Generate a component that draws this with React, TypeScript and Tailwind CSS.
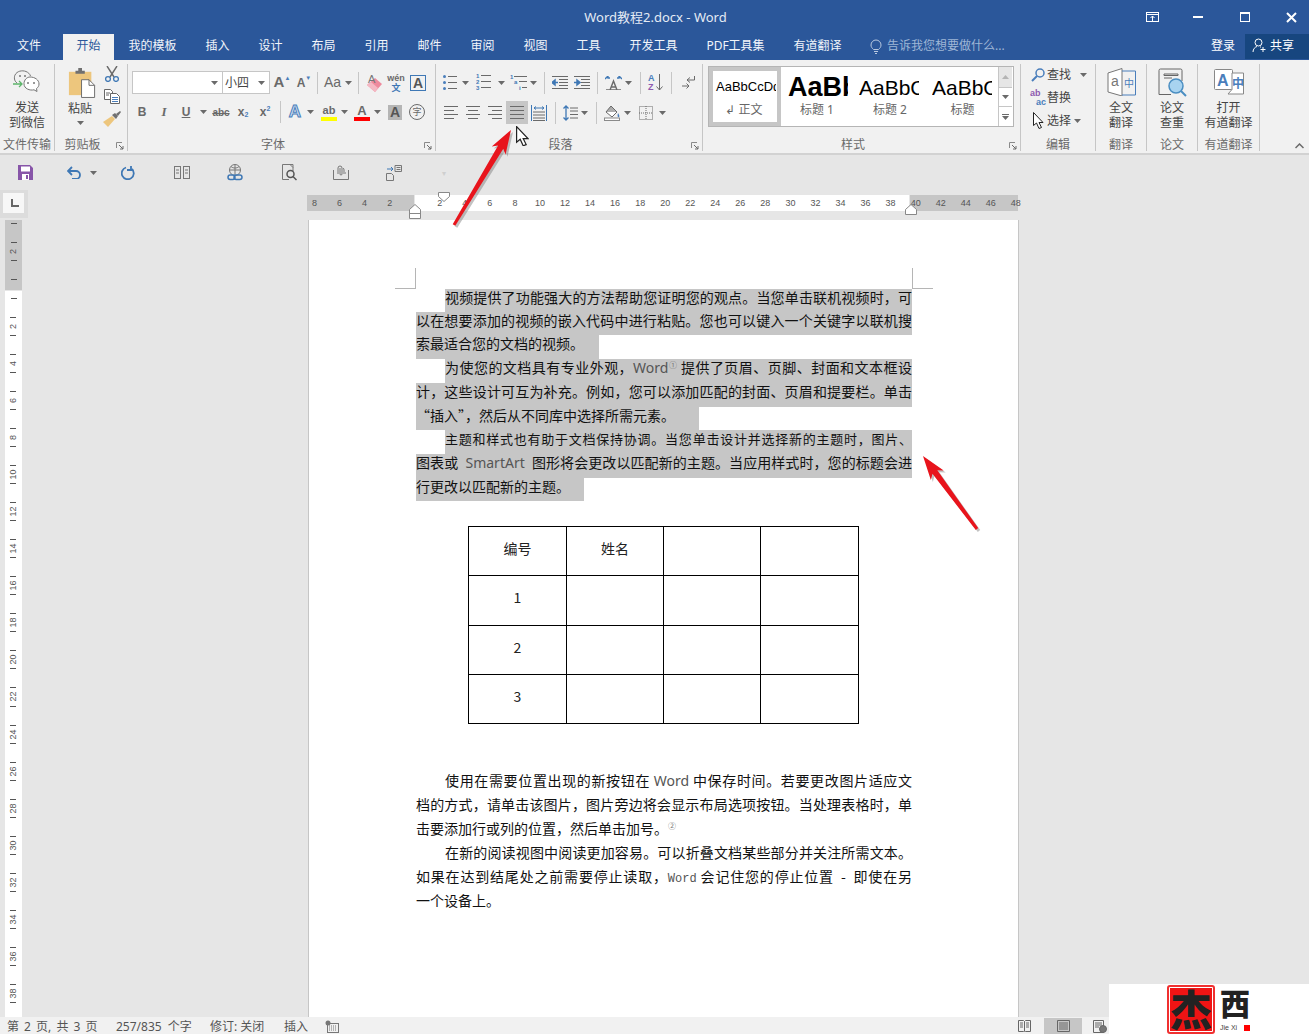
import type { ReactNode } from "react";

const ui = "font-['Noto_Sans','Noto_Sans_CJK_SC',sans-serif]";
const latin = "font-['Liberation_Sans',sans-serif]";

const Caret = ({ className = "" }: { className?: string }) => (
  <svg width="7" height="4" viewBox="0 0 7 4" className={className}>
    <path d="M0 0h7L3.5 4z" fill="#6a6a6a" />
  </svg>
);

const Slot = ({ className, children }: { className: string; children?: ReactNode }) => (
  <div className={`flex h-full shrink-0 items-center justify-center ${className}`}>{children}</div>
);

const Sep = ({ className = "" }: { className?: string }) => (
  <div className={`h-[22px] w-px shrink-0 bg-[#c6c6c6] ${className}`} />
);

const Launcher = () => (
  <svg width="8" height="8" viewBox="0 0 8 8" className="absolute right-[3px] bottom-[1px]">
    <path d="M.5 6V.5H6" fill="none" stroke="#8a8a8a" />
    <path d="M3 3l4 4M7 4v3H4" fill="none" stroke="#6a6a6a" />
  </svg>
);

// ---- ribbon icons ----
const WechatIcon = () => (
  <svg width="28" height="25" viewBox="0 0 28 25" fill="none">
    <path d="M4 14C1 12 1 8 2 6c2-4 7-5 11-3.500 2 .8 4 2.500 4.500 4.500" stroke="#777" />
    <path d="M17 8c5 0 9 3 9 7 0 2-1 3.500-2.500 4.500l.5 3-3-1.700c-4 1-10-1-10-6 0-4 3-6.800 6-6.800z" fill="#fff" stroke="#777" />
    <circle cx="7" cy="7" r="1" fill="#777" /><circle cx="12" cy="7" r="1" fill="#777" />
    <circle cx="15" cy="14" r="1" fill="#777" /><circle cx="21" cy="14" r="1" fill="#777" />
    <path d="M0 15h9M6 12l3 3-3 3" stroke="#5db56b" strokeWidth="1.300" />
  </svg>
);
const PasteIcon = () => (
  <svg width="28" height="30" viewBox="0 0 30 32">
    <rect x="1" y="4" width="24" height="25" fill="#edc67d" />
    <path d="M8 6V3h3V0h4v3h3v3z" fill="#707070" />
    <path d="M14.500 12.500h8l6 6v13h-14z" fill="#fff" stroke="#666" />
    <path d="M22.500 12.500v6h6" fill="none" stroke="#666" />
  </svg>
);
const ScissorsIcon = () => (
  <svg width="16" height="16" viewBox="0 0 16 16" fill="none">
    <path d="M3 0l7 11M13 0L6 11" stroke="#6a6a6a" strokeWidth="1.400" />
    <circle cx="4" cy="13" r="2.400" stroke="#3f78b5" strokeWidth="1.300" />
    <circle cx="12" cy="13" r="2.400" stroke="#3f78b5" strokeWidth="1.300" />
  </svg>
);
const CopyIcon = () => (
  <svg width="16" height="15" viewBox="0 0 16 15" fill="#fff" stroke="#666">
    <path d="M.5.500h6l2 2v8h-8z" />
    <path d="M6.500 4.500h6l3 3v7h-9z" />
    <path d="M8 8.500h6M8 10.500h6M8 12.500h6" stroke="#4a7ebb" />
    <path d="M2 4h4M2 6h3" />
  </svg>
);
const PainterIcon = () => (
  <svg width="18" height="16" viewBox="0 0 18 16">
    <path d="M9 5l-9 6 5 5 7-8z" fill="#edc67d" />
    <path d="M9 4l3-2 3 3-2 3z" fill="#707070" />
    <path d="M13 3l4-3 1 1-3 4z" fill="#707070" />
  </svg>
);
const EraserIcon = () => (
  <svg width="17" height="20" viewBox="0 0 17 20">
    <path d="M1 12L9 5l7 6-7 8z" fill="#ee8a9d" />
    <path d="M1 12l4-3 7 6-3 4z" fill="#f5b8c3" />
    <text x="2" y="10" fontSize="11" fill="#777" fontFamily="Liberation Sans">A</text>
  </svg>
);
const Lines = ({ rows, w = 14 }: { rows: [number, number][]; w?: number }) => (
  <svg width={w} height="15" viewBox={`0 0 ${w} 15`}>
    {rows.map(([x, l], i) => (
      <rect key={i} x={x} y={1 + i * 4} width={l} height="1" fill="#6a6a6a" />
    ))}
  </svg>
);
const BulletIcon = () => (
  <svg width="14" height="16" viewBox="0 0 14 16">
    {[1, 7, 13].map((y) => (
      <g key={y}>
        <circle cx="1.500" cy={y + 0.5} r="1.500" fill="#4a7ebb" />
        <rect x="5" y={y} width="9" height="1" fill="#6a6a6a" />
      </g>
    ))}
  </svg>
);
const NumberIcon = () => (
  <svg width="16" height="17" viewBox="0 0 16 17">
    {[4, 10, 16].map((y, i) => (
      <g key={y}>
        <text x="0" y={y} fontSize="6" fill="#3f78b5" fontFamily="Liberation Sans" fontWeight="700">{i + 1}</text>
        <rect x="5" y={y - 3} width="10" height="1" fill="#6a6a6a" />
      </g>
    ))}
  </svg>
);
const MultiIcon = () => (
  <svg width="18" height="17" viewBox="0 0 18 17">
    <text x="0" y="5" fontSize="6" fill="#3f78b5" fontWeight="700" fontFamily="Liberation Sans">1</text>
    <rect x="4" y="2" width="13" height="1" fill="#6a6a6a" />
    <text x="4" y="10" fontSize="6" fill="#3f78b5" fontWeight="700" fontFamily="Liberation Sans">a</text>
    <rect x="9" y="7" width="8" height="1" fill="#6a6a6a" />
    <text x="9" y="16" fontSize="6" fill="#3f78b5" fontWeight="700" fontFamily="Liberation Sans">i</text>
    <rect x="12" y="13" width="5" height="1" fill="#6a6a6a" />
  </svg>
);
const IndentIcon = ({ flip = false }: { flip?: boolean }) => (
  <svg width="16" height="13" viewBox="0 0 16 13">
    <path d="M0 .5h16M7 3.500h9M7 6.500h9M7 9.500h9M0 12.500h16" stroke="#6a6a6a" />
    <path d={flip ? "M0 6.500h3V4l3 2.500L3 9V6.500" : "M6 6.500H3V4L0 6.500 3 9V6.500"} stroke="#3f78b5" strokeWidth="1.500" fill="#3f78b5" />
  </svg>
);
const DirectionIcon = () => (
  <svg width="17" height="14" viewBox="0 0 17 14" fill="none">
    <path d="M5 14L8.500 5 12 14M6 11h5M1 14h15" stroke="#6a6a6a" strokeWidth="1.400" />
    <path d="M0 3l3-3v2h2M17 3l-3-3v2h-2" stroke="#3f78b5" strokeWidth="1.400" />
  </svg>
);
const SortIcon = () => (
  <div className={`relative flex h-[18px] w-[16px] ${latin}`}>
    <div className="flex flex-col text-[9px] leading-[9px] font-bold">
      <span className="text-[#4a7ebb]">A</span>
      <span className="text-[#8e5aaf]">Z</span>
    </div>
    <svg width="7" height="17" viewBox="0 0 7 17" className="ml-[1px]" fill="none">
      <path d="M3.500 0v16M.5 12.500l3 3.500 3-3.500" stroke="#6a6a6a" />
    </svg>
  </div>
);
const RtlIcon = () => (
  <svg width="13" height="14" viewBox="0 0 13 14" fill="none">
    <path d="M12.500 0v4H5M8 1.500L5 4l3 2.500" stroke="#6a6a6a" />
    <path d="M0 10h7M4.500 7.500L7 10l-2.500 2.500" stroke="#6a6a6a" />
  </svg>
);
const DistIcon = () => (
  <svg width="16" height="16" viewBox="0 0 16 16" fill="none">
    <path d="M.5 0v16" stroke="#3f78b5" /><path d="M15.500 0v16" stroke="#3f78b5" />
    <path d="M3 3h10M5 1.500L3 3l2 1.500M11 1.500L13 3l-2 1.500" stroke="#3f78b5" />
    <path d="M2 7h12M2 10h12M2 13h12M2 15.500h12" stroke="#6a6a6a" />
  </svg>
);
const SpacingIcon = () => (
  <svg width="15" height="16" viewBox="0 0 15 16" fill="none">
    <path d="M3 1v14M.5 3.500L3 1l2.500 2.500M.5 12.500L3 15l2.500-2.500" stroke="#3f78b5" strokeWidth="1.300" />
    <path d="M7 3h8M7 6h8M7 9.500h8M7 13h8" stroke="#6a6a6a" />
  </svg>
);
const ShadeIcon = () => (
  <svg width="17" height="17" viewBox="0 0 17 17" fill="none">
    <path d="M2 8l5-6 6 6-5 5z" fill="#fff" stroke="#6a6a6a" />
    <path d="M7 2l6 6H2z" fill="#6a6a6a" opacity=".55" />
    <path d="M14 9c1 2 2 3 1 4s-2-1-1-4z" fill="#4a7ebb" />
    <rect x=".5" y="14" width="15" height="2.500" fill="#fff" stroke="#8a8a8a" />
  </svg>
);
const BorderIcon = () => (
  <svg width="14" height="14" viewBox="0 0 14 14" fill="none" stroke="#6a6a6a" strokeDasharray="1 1">
    <rect x=".5" y=".5" width="13" height="13" />
    <path d="M7 0v14M0 7h14" />
  </svg>
);
const FindIcon = () => (
  <svg width="14" height="14" viewBox="0 0 14 14" fill="none">
    <circle cx="9" cy="5" r="4" stroke="#4a7ebb" strokeWidth="1.500" />
    <path d="M6 8l-5 5" stroke="#4a7ebb" strokeWidth="2" />
  </svg>
);
const ReplaceIcon = () => (
  <div className={`flex h-[18px] w-[16px] flex-col text-[9px] leading-[9px] font-bold ${latin}`}>
    <span className="text-[#8e5aaf]">ab</span>
    <span className="self-end text-[#4a7ebb]">ac</span>
  </div>
);
const PointerIcon = ({ s = 1 }: { s?: number }) => (
  <svg width={11 * s} height={17 * s} viewBox="0 0 11 17">
    <path d="M.5.500v13l3-2.500 2.500 5.500 2.500-1L6 10.500h4z" fill="#fff" stroke="#222" />
  </svg>
);
const TranslateIcon = () => (
  <svg width="29" height="28" viewBox="0 0 29 28" fill="none">
    <path d="M1 5l14-4.500V28L1 24z" fill="#fff" stroke="#777" />
    <text x="4" y="18" fontSize="14" fill="#777" fontFamily="Liberation Sans">a</text>
    <path d="M15 3h13.500v24H15" stroke="#4a7ebb" />
    <text x="17" y="19" fontSize="10" fill="#4a7ebb" fontFamily="Noto Sans CJK SC">中</text>
  </svg>
);
const CheckIcon = () => (
  <svg width="29" height="29" viewBox="0 0 29 29" fill="none">
    <path d="M24 13V2.500a1.500 1.500 0 0 0-1.500-1.500h-20A1.500 1.500 0 0 0 1 2.500v24H13" stroke="#666" />
    <path d="M6 6h14v1.500H6zM6 10h8" stroke="#666" />
    <circle cx="18" cy="18" r="7" fill="#a8d3f0" stroke="#4a8ec2" strokeWidth="1.500" />
    <path d="M23 23l5 5" stroke="#4a8ec2" strokeWidth="2" />
  </svg>
);
const OpenIcon = () => (
  <svg width="30" height="26" viewBox="0 0 30 26" fill="none">
    <rect x=".5" y=".5" width="18" height="20" rx="1" fill="#fff" stroke="#888" />
    <text x="3" y="17" fontSize="16" fontWeight="700" fill="#4a7ebb" fontFamily="Liberation Sans">A</text>
    <path d="M18 4h11.500v21H14l4-4.500z" fill="#fff" stroke="#888" />
    <text x="18" y="19" fontSize="12" fontWeight="700" fill="#4a7ebb" fontFamily="Noto Sans CJK SC">中</text>
  </svg>
);

// ---- ribbon groups ----
const Group = ({ className, label, launcher, children }: { className: string; label: string; launcher?: boolean; children: ReactNode }) => (
  <div className={`relative flex h-[87px] shrink-0 flex-col border-r border-[#c6c6c6] ${className}`}>
    <div className="min-h-0 flex-1">{children}</div>
    <div className={`h-[14px] text-center text-[12px] leading-[15px] text-[#6a6a6a] ${launcher ? "pr-[17px]" : ""}`}>{label}</div>
    {launcher && <Launcher />}
  </div>
);

const BigButton = ({ icon, lines, iconClass }: { icon: ReactNode; lines: string[]; iconClass: string }) => (
  <div className="flex flex-col items-center text-[12px] leading-[14.5px] text-[#444]">
    <div className={`mb-[4px] flex items-center justify-center ${iconClass}`}>{icon}</div>
    {lines.map((l) => (
      <div key={l} className="whitespace-nowrap">{l}</div>
    ))}
  </div>
);

const FontGroup = () => (
  <div className={`flex h-full flex-col ${latin}`}>
    <div className="mt-[7px] flex h-[23px] items-center pl-[4px] text-[#6a6a6a]">
      <div className="flex h-[23px] w-[91px] items-center justify-end border border-[#c6c6c6] bg-white pr-[4px]"><Caret /></div>
      <div className={`flex h-[23px] w-[47px] items-center justify-between border border-l-0 border-[#c6c6c6] bg-white pr-[4px] pl-[2px] text-[12px] text-[#444] ${ui}`}>小四<Caret /></div>
      <Slot className="w-[22px] pl-[2px]"><span className="text-[15px] font-bold">A</span><span className="mb-[8px] text-[6px] text-[#4a7ebb]">▲</span></Slot>
      <Slot className="w-[22px] pl-[2px]"><span className="text-[12px] font-bold">A</span><span className="mb-[8px] text-[6px] text-[#4a7ebb]">▼</span></Slot>
      <Sep className="ml-[3px]" />
      <Slot className="w-[36px] gap-[4px] pl-[4px]"><span className="text-[14px]">Aa</span><Caret /></Slot>
      <Sep className="ml-[4px]" />
      <Slot className="ml-[4px] w-[22px]"><EraserIcon /></Slot>
      <Slot className="w-[22px] flex-col text-[9px] leading-[10px] font-bold"><span>wén</span><span className={`text-[#3f78b5] ${ui}`}>文</span></Slot>
      <Slot className="w-[22px]"><span className="flex h-[16px] w-[16px] items-center justify-center border border-[#3f78b5] text-[14px] leading-none font-bold text-[#555]">A</span></Slot>
    </div>
    <div className="mt-[6px] flex h-[24px] items-center pl-[3px] text-[#6a6a6a]">
      <Slot className="w-[22px] text-[12px] font-bold">B</Slot>
      <Slot className="w-[22px] font-['Liberation_Serif'] text-[13px] font-bold italic">I</Slot>
      <Slot className="w-[22px] text-[12px] font-bold underline">U</Slot>
      <Slot className="w-[13px]"><Caret /></Slot>
      <Slot className="w-[22px] text-[10px] font-bold line-through">abc</Slot>
      <Slot className="w-[22px] text-[12px] font-bold">x<span className="mt-[6px] text-[7px] text-[#4a7ebb]">2</span></Slot>
      <Slot className="w-[22px] text-[12px] font-bold">x<span className="mb-[6px] text-[7px] text-[#4a7ebb]">2</span></Slot>
      <Sep className="ml-[4px]" />
      <Slot className="ml-[3px] w-[22px]"><span className="text-[17px] font-bold text-[#cfe0f2] [-webkit-text-stroke:1px_#4a7ebb]">A</span></Slot>
      <Slot className="w-[8px]"><Caret /></Slot>
      <Slot className="ml-[4px] w-[22px]">
        <div className="flex w-[16px] flex-col items-center text-[11px] leading-[12px] font-bold">ab<div className="mt-[1px] h-[4px] w-[16px] bg-[#ffff00]" /></div>
      </Slot>
      <Slot className="w-[8px]"><Caret /></Slot>
      <Slot className="ml-[3px] w-[22px]">
        <div className="flex w-[16px] flex-col items-center text-[13px] leading-[13px] font-bold">A<div className="h-[4px] w-[16px] bg-[#ff0000]" /></div>
      </Slot>
      <Slot className="w-[8px]"><Caret /></Slot>
      <Slot className="ml-[3px] w-[22px]"><span className="flex h-[15px] w-[14px] items-center justify-center bg-[#b5b5b5] text-[14px] font-bold text-[#555]">A</span></Slot>
      <Slot className="w-[22px]"><span className={`flex h-[16px] w-[16px] items-center justify-center rounded-full border border-[#6a6a6a] text-[9px] ${ui}`}>字</span></Slot>
    </div>
  </div>
);

const AlignIcon = (rows: [number, number][]) => <Lines rows={rows} />;

const ParagraphGroup = () => (
  <div className="flex h-full flex-col">
    <div className="mt-[7px] flex h-[23px] items-center pl-[3px]">
      <Slot className="w-[22px]"><BulletIcon /></Slot>
      <Slot className="w-[8px]"><Caret /></Slot>
      <Slot className="ml-[2px] w-[26px]"><NumberIcon /></Slot>
      <Slot className="w-[8px]"><Caret /></Slot>
      <Slot className="ml-[4px] w-[20px]"><MultiIcon /></Slot>
      <Slot className="w-[8px]"><Caret /></Slot>
      <Sep className="ml-[7px]" />
      <Slot className="ml-[4px] w-[22px]"><IndentIcon /></Slot>
      <Slot className="w-[22px]"><IndentIcon flip /></Slot>
      <Sep className="ml-[4px]" />
      <Slot className="ml-[4px] w-[22px]"><DirectionIcon /></Slot>
      <Slot className="w-[8px]"><Caret /></Slot>
      <Sep className="ml-[8px]" />
      <Slot className="ml-[4px] w-[22px]"><SortIcon /></Slot>
      <Sep className="ml-[4px]" />
      <Slot className="ml-[5px] w-[22px]"><RtlIcon /></Slot>
    </div>
    <div className="mt-[7px] flex h-[23px] items-center pl-[4px]">
      <Slot className="w-[22px]">{AlignIcon([[0, 14], [0, 10], [0, 14], [0, 10]])}</Slot>
      <Slot className="w-[22px]">{AlignIcon([[0, 14], [2, 10], [0, 14], [2, 10]])}</Slot>
      <Slot className="w-[22px]">{AlignIcon([[0, 14], [4, 10], [0, 14], [4, 10]])}</Slot>
      <Slot className="w-[22px] bg-[#c6c6c6]">{AlignIcon([[0, 14], [0, 14], [0, 14], [0, 14]])}</Slot>
      <Slot className="w-[22px]"><DistIcon /></Slot>
      <Sep className="ml-[5px]" />
      <Slot className="ml-[4px] w-[20px]"><SpacingIcon /></Slot>
      <Slot className="w-[8px]"><Caret /></Slot>
      <Sep className="ml-[8px]" />
      <Slot className="ml-[4px] w-[22px]"><ShadeIcon /></Slot>
      <Slot className="w-[8px]"><Caret /></Slot>
      <Slot className="ml-[4px] w-[22px]"><BorderIcon /></Slot>
      <Slot className="ml-[1px] w-[8px]"><Caret /></Slot>
    </div>
  </div>
);

const StyleCell = ({ sample, name, className, sampleClass }: { sample: string; name: string; className: string; sampleClass: string }) => (
  <div className={`flex h-full shrink-0 flex-col items-center ${className}`}>
    <div className={`mt-[3px] h-[35px] w-[60px] self-start overflow-hidden leading-[35px] whitespace-nowrap text-black ${latin} ${sampleClass}`}>{sample}</div>
    <div className="-mt-[3px] text-[12px] leading-[16px] whitespace-nowrap text-[#666]">{name}</div>
  </div>
);

const StylesGroup = () => (
  <div className="mt-[2px] ml-[5px] flex h-[61px] w-[306px] border border-[#b5b5b5] bg-white">
    <div className="flex h-full w-[72px] shrink-0 flex-col items-center border-[4px] border-[#c6c6c6]">
      <div className={`h-[31px] w-[62px] overflow-hidden pl-[2px] text-[13px] leading-[31px] whitespace-nowrap text-black ${latin}`}>AaBbCcDd</div>
      <div className="pr-[2px] text-[12px] leading-[16px] whitespace-nowrap text-[#666]">↲ 正文</div>
    </div>
    <StyleCell sample="AaBb" name="标题 1" className="w-[72px]" sampleClass="ml-[7px] text-[27px] font-bold" />
    <StyleCell sample="AaBbC" name="标题 2" className="w-[74px]" sampleClass="ml-[6px] text-[21px]" />
    <StyleCell sample="AaBbC" name="标题" className="w-[71px]" sampleClass="ml-[5px] text-[21px]" />
    <div className="flex w-[14px] shrink-0 flex-col border-l border-[#c6c6c6]">
      <div className="flex h-[21px] items-center justify-center border-b border-[#c6c6c6] bg-[#e6e6e6]"><Caret className="rotate-180 opacity-40" /></div>
      <div className="flex h-[19px] items-center justify-center border-b border-[#c6c6c6]"><Caret /></div>
      <div className="flex flex-1 flex-col items-center justify-center gap-[1px]"><div className="h-px w-[7px] bg-[#6a6a6a]" /><Caret /></div>
    </div>
  </div>
);

const EditRow = ({ icon, label, caret, caretClass = "" }: { icon: ReactNode; label: string; caret?: boolean; caretClass?: string }) => (
  <div className="flex h-[23px] items-center pl-[8px] text-[12px] text-[#444]">
    <div className="flex w-[18px] justify-center">{icon}</div>
    <span>{label}</span>
    {caret && <Caret className={caretClass} />}
  </div>
);

const Ribbon = () => (
  <div className="flex h-[95px] shrink-0 border-b-2 border-[#d2d2d2] bg-[#f1f1f1] pt-[4px]">
    <Group className="w-[55px]" label="文件传输">
      <BigButton icon={<WechatIcon />} lines={["发送", "到微信"]} iconClass="mt-[2px] h-[31px]" />
    </Group>
    <Group className="w-[73px]" label="剪贴板" launcher>
      <div className="flex">
        <div className="ml-[9px] flex w-[32px] flex-col items-center text-[12px] leading-[15px] text-[#444]">
          <div className="mt-[4px] mb-[3px] h-[30px] translate-x-[2px]"><PasteIcon /></div>
          粘贴
          <Caret className="mt-[5px]" />
        </div>
        <div className="ml-[7px] flex flex-col items-center gap-[7px] pt-[2px]">
          <ScissorsIcon /><CopyIcon /><PainterIcon />
        </div>
      </div>
    </Group>
    <Group className="w-[308px]" label="字体" launcher>
      <FontGroup />
    </Group>
    <Group className="w-[267px]" label="段落" launcher>
      <ParagraphGroup />
    </Group>
    <Group className="w-[318px]" label="样式" launcher>
      <StylesGroup />
    </Group>
    <Group className="w-[75px]" label="编辑">
      <div className="-mt-[1px]">
        <EditRow icon={<FindIcon />} label="查找" caret caretClass="ml-[9px]" />
        <EditRow icon={<ReplaceIcon />} label="替换" />
        <EditRow icon={<PointerIcon />} label="选择" caret caretClass="ml-[3px]" />
      </div>
    </Group>
    <Group className="w-[51px]" label="翻译">
      <BigButton icon={<TranslateIcon />} lines={["全文", "翻译"]} iconClass="mt-[3px] h-[30px]" />
    </Group>
    <Group className="w-[51px]" label="论文">
      <BigButton icon={<CheckIcon />} lines={["论文", "查重"]} iconClass="mt-[3px] h-[30px]" />
    </Group>
    <Group className="w-[62px]" label="有道翻译">
      <BigButton icon={<OpenIcon />} lines={["打开", "有道翻译"]} iconClass="mt-[3px] h-[30px]" />
    </Group>
    <div className="flex h-[87px] flex-1 items-end justify-end pr-[5px] pb-[2px]">
      <svg width="9" height="6" viewBox="0 0 9 6" fill="none"><path d="M.5 5l4-4 4 4" stroke="#6a6a6a" strokeWidth="1.500" /></svg>
    </div>
  </div>
);

const tabs: [string, string][] = [
  ["我的模板", "w-[77px]"], ["插入", "w-[53px]"], ["设计", "w-[53px]"], ["布局", "w-[53px]"], ["引用", "w-[53px]"],
  ["邮件", "w-[53px]"], ["审阅", "w-[53px]"], ["视图", "w-[53px]"], ["工具", "w-[53px]"], ["开发工具", "w-[77px]"],
  ["PDF工具集", "w-[87px]"], ["有道翻译", "w-[77px]"],
];

const TitleBar = () => (
  <div className="shrink-0 bg-[#2b579a] text-white">
    <div className="relative flex h-[34px] items-center justify-center">
      <span className="translate-x-[1px] pt-[2px] text-[13px] text-[#e4ebf5]">Word教程2.docx - Word</span>
      <div className="absolute top-0 right-0 flex h-[34px] items-center">
        <svg width="13" height="10" viewBox="0 0 13 10" fill="none" className="mr-[34px]">
          <rect x=".5" y=".5" width="12" height="9" stroke="#fff" />
          <path d="M.5 2.500h12M6.500 9V4M4.500 6l2-2 2 2" stroke="#fff" />
        </svg>
        <div className="mr-[37px] h-[2px] w-[10px] bg-white" />
        <div className="mr-[36px] h-[10px] w-[10px] border border-t-2 border-white" />
        <svg width="11" height="11" viewBox="0 0 11 11" className="mr-[12px]"><path d="M1 1l9 9M10 1l-9 9" stroke="#fff" strokeWidth="2" /></svg>
      </div>
    </div>
    <div className="flex h-[26px] items-stretch text-[12px] text-[#f2f5fa]">
      <div className="ml-[3px] flex w-[52px] items-center justify-center pb-[2px]">文件</div>
      <div className="ml-[8px] flex w-[51px] items-center justify-center bg-[#f1f1f1] pb-[2px] text-[#2b579a]">开始</div>
      {tabs.map(([t, w]) => (
        <div key={t} className={`flex items-center justify-center pb-[2px] ${w}`}>{t}</div>
      ))}
      <div className="ml-[14px] flex items-center gap-[5px] pb-[2px] text-[#9fb6d6]">
        <svg width="12" height="15" viewBox="0 0 12 15" fill="none">
          <path d="M3.500 10.500C2 9 1 8 1 6a5 5 0 0 1 10 0c0 2-1 3-2.500 4.500z" stroke="#b9c9e0" />
          <path d="M4 12.500h4M5 14.500h2" stroke="#b9c9e0" />
        </svg>
        告诉我您想要做什么...
      </div>
      <div className="flex flex-1 items-center justify-end pr-[10px] pb-[2px] text-white">登录</div>
      <div className="flex h-[25px] w-[64px] items-center gap-[3px] bg-[#17467f] pb-[2px] pl-[7px] text-white">
        <svg width="15" height="15" viewBox="0 0 15 15" fill="none">
          <circle cx="6.500" cy="4.500" r="3.500" stroke="#fff" />
          <path d="M1 14c0-3 2-5 4-5.500M8 9h1M11 9v5M8.500 11.500h5" stroke="#fff" />
        </svg>
        共享
      </div>
    </div>
  </div>
);

const QuickBar = () => (
  <div className="flex h-[35px] shrink-0 items-center bg-[#e6e6e6]">
    <Slot className="ml-[14px] w-[22px]">
      <svg width="15" height="15" viewBox="0 0 15 15">
        <path d="M0 0h12l3 3v12H0z" fill="#8755a8" />
        <rect x="3" y="1.500" width="9" height="5" fill="#fff" />
        <rect x="4" y="9" width="7" height="6" fill="#fff" /><rect x="8" y="10" width="2" height="4" fill="#8755a8" />
      </svg>
    </Slot>
    <Slot className="ml-[27px] w-[22px]">
      <svg width="15" height="13" viewBox="0 0 15 13" fill="none"><path d="M5 1L1 5l4 4M1 5h8a4 4 0 0 1 0 8H5" stroke="#3f78b5" strokeWidth="1.800" /></svg>
    </Slot>
    <Slot className="w-[16px]"><Caret /></Slot>
    <Slot className="ml-[16px] w-[22px]">
      <svg width="14" height="14" viewBox="0 0 14 14" fill="none"><path d="M5 1.500A6 6 0 1 0 11 3M10 0v4H6" stroke="#3f78b5" strokeWidth="1.800" /></svg>
    </Slot>
    <Slot className="ml-[32px] w-[22px]">
      <svg width="16" height="13" viewBox="0 0 16 13" fill="none" stroke="#777"><rect x=".5" y=".5" width="6" height="12" /><rect x="9.500" y=".5" width="6" height="12" /><path d="M2 4h3M2 7h3M11 4h3M11 7h3" /></svg>
    </Slot>
    <Slot className="ml-[31px] w-[22px]">
      <svg width="16" height="17" viewBox="0 0 16 17" fill="none">
        <circle cx="8" cy="6" r="5.500" stroke="#777" /><path d="M2.500 6h11M8 .5v11M4 2.500c2 2 6 2 8 0" stroke="#777" />
        <rect x="1" y="11" width="7" height="4.500" rx="2.200" stroke="#3f78b5" strokeWidth="1.500" />
        <rect x="7" y="11" width="8" height="4.500" rx="2.200" stroke="#3f78b5" strokeWidth="1.500" />
      </svg>
    </Slot>
    <Slot className="ml-[32px] w-[22px]">
      <svg width="15" height="17" viewBox="0 0 15 17" fill="none"><path d="M11 7V.5H.5v15H7M8 .5l3 3" stroke="#777" /><circle cx="8.500" cy="10" r="3.500" stroke="#555" strokeWidth="1.500" /><path d="M11 12.500l3.500 3.500" stroke="#555" strokeWidth="1.500" /></svg>
    </Slot>
    <Slot className="ml-[30px] w-[22px]">
      <svg width="16" height="15" viewBox="0 0 16 15" fill="none" stroke="#777"><path d="M.5 5v9.500h15V5M13 8l-1 0" /><path d="M5 9V3a2 2 0 0 1 4 0v6a1 1 0 0 1-2 0V3" /><path d="M10 3a2 2 0 0 1 1 2v4" /></svg>
    </Slot>
    <Slot className="ml-[31px] w-[22px]">
      <svg width="16" height="16" viewBox="0 0 16 16" fill="none" stroke="#777"><path d="M.5 8.500h5l2 2v5h-7z" /><path d="M9 .5h6.500v6H9zM10.500 2.500h4M10.500 4.500h4" /><path d="M1 4h6M5 2l2 2-2 2" stroke="#3f78b5" /></svg>
    </Slot>
    <div className="ml-[37px] text-[8px] text-[#cfcfcf]">▾</div>
  </div>
);

const rulerNums = ["8", "6", "4", "2", "", "2", "4", "6", "8", "10", "12", "14", "16", "18", "20", "22", "24", "26", "28", "30", "32", "34", "36", "38", "40", "42", "44", "46", "48"];

const HRuler = () => (
  <div className="flex h-[30px] shrink-0 bg-[#e6e6e6]">
    <div className="h-[28px] w-[28px] bg-[#dcdcdc] pt-[3px] pl-[3px]">
      <div className="flex h-[20px] w-[21px] items-center justify-center bg-[#f7f7f7]">
        <div className="h-[8px] w-[8px] translate-x-[1px] border-b-2 border-l-2 border-[#666]" />
      </div>
    </div>
    <div className="relative mt-[5px] ml-[279px] flex h-[16px] w-[711px]">
      <div className="w-[107px] bg-[#c6c6c6]" />
      <div className="ml-px w-[494px] bg-white" />
      <div className="ml-px w-[108px] bg-[#c6c6c6]" />
      <div className={`absolute top-0 -left-[5px] flex h-[16px] text-[9px] leading-[16px] text-[#555] ${latin}`}>
        {rulerNums.map((n, i) => (
          <div key={i} className="w-[25.05px] text-center">{n}</div>
        ))}
      </div>
      <svg width="12" height="11" viewBox="0 0 12 11" className="absolute -top-[3px] left-[131px]"><path d="M.5.500h11v4l-5.500 5-5.500-5z" fill="#fff" stroke="#888" /></svg>
      <svg width="12" height="15" viewBox="0 0 12 15" className="absolute top-[9px] left-[102px]"><path d="M.5 14.500v-9l5.500-5 5.500 5v9zM.5 9.500h11" fill="#fff" stroke="#888" /></svg>
      <svg width="12" height="11" viewBox="0 0 12 11" className="absolute top-[9px] left-[598px]"><path d="M.5 10.500v-5l5.500-5 5.500 5v5z" fill="#fff" stroke="#888" /></svg>
    </div>
  </div>
);

const RulerCell = ({ n }: { n: number }) => (
  <div className="flex h-[37.05px] flex-col items-center justify-between py-[9px]">
    <div className="h-px w-[6px] bg-[#555]" />
    <div className={`-rotate-90 text-[9px] leading-[9px] whitespace-nowrap text-[#555] ${latin}`}>{n}</div>
    <div className="h-px w-[6px] bg-[#555]" />
  </div>
);

const VRuler = () => (
  <div className="ml-[5px] flex w-[17px] shrink-0 flex-col">
    <div className="flex h-[70px] shrink-0 flex-col items-center bg-[#c6c6c6] pt-[3px]">
      <div className="h-px w-[6px] bg-[#555]" />
      <div className="mt-[8.5px]"><RulerCell n={2} /></div>
      <div className="mt-[9px] h-px w-[6px] bg-[#555]" />
    </div>
    <div className="mt-px flex flex-1 flex-col items-center overflow-hidden bg-white pt-[7px]">
      <div className="h-px w-[6px] bg-[#555]" />
      <div className="mt-[9px]">
        {Array.from({ length: 19 }, (_, i) => (
          <RulerCell key={i} n={(i + 1) * 2} />
        ))}
      </div>
    </div>
  </div>
);

const full = "[text-align:justify] [text-align-last:justify]";
const sel = "bg-[#c6c6c6]";
const W = ({ children, className = "font-['Noto_Sans']" }: { children: ReactNode; className?: string }) => (
  <span className={`text-[#555] ${className}`}>{children}</span>
);
const Note = ({ children }: { children: ReactNode }) => (
  <span className="relative -top-[5px] text-[8px] leading-none text-[#777]">{children}</span>
);

const Page = () => (
  <div className="relative ml-[286px] w-[711px] border-x border-[#c6c6c6] bg-white pt-[69px] pl-[107px]">
    <div className="absolute top-[48px] left-[86px] h-[21px] w-[21px] border-r border-b border-[#b5b5b5]" />
    <div className="absolute top-[48px] left-[603px] h-[21px] w-[21px] border-b border-l border-[#b5b5b5]" />
    <div className="w-[496px] font-['Noto_Sans_CJK_SC',sans-serif] text-[14px] text-[#111]">
      <div className={`ml-[29px] h-[23px] leading-[16px] ${sel} ${full}`}>视频提供了功能强大的方法帮助您证明您的观点。当您单击联机视频时，可</div>
      <div className={`h-[23px] leading-[16px] ${sel} ${full}`}>以在想要添加的视频的嵌入代码中进行粘贴。您也可以键入一个关键字以联机搜</div>
      <div className={`h-[24px] w-[183px] leading-[17px] ${sel}`}>索最适合您的文档的视频。</div>
      <div className={`ml-[29px] h-[24px] leading-[17px] ${sel} ${full}`}>为使您的文档具有专业外观，<W>Word</W><Note>①</Note> 提供了页眉、页脚、封面和文本框设</div>
      <div className={`h-[24px] leading-[17px] ${sel} ${full}`}>计，这些设计可互为补充。例如，您可以添加匹配的封面、页眉和提要栏。单击</div>
      <div className={`h-[23px] w-[283px] leading-[16px] ${sel}`}>“插入”，然后从不同库中选择所需元素。</div>
      <div className={`ml-[29px] h-[24px] text-[13px] leading-[17px] ${sel} ${full}`}>主题和样式也有助于文档保持协调。当您单击设计并选择新的主题时，图片、</div>
      <div className={`h-[24px] leading-[17px] ${sel} ${full}`}>图表或 <W className="mx-[4px] font-['Noto_Sans']">SmartArt</W> 图形将会更改以匹配新的主题。当应用样式时，您的标题会进</div>
      <div className={`h-[23px] w-[168px] leading-[16px] ${sel}`}>行更改以匹配新的主题。</div>

      <table className="mt-[25px] ml-[52px] w-[390px] table-fixed border-collapse text-center text-[14px] text-[#222]">
        <tbody>
          {[["编号", "姓名"], ["1", ""], ["2", ""], ["3", ""]].map((row, i) => (
            <tr key={i} className="h-[49.25px]">
              <td className="w-[98px] border border-black pb-[5px]">{row[0]}</td>
              <td className="w-[97px] border border-black pb-[5px]">{row[1]}</td>
              <td className="w-[97px] border border-black" />
              <td className="w-[98px] border border-black" />
            </tr>
          ))}
        </tbody>
      </table>

      <div className="mt-[46px] leading-[20px]">
        <div className={`ml-[29px] h-[24px] ${full}`}>使用在需要位置出现的新按钮在 <W>Word</W> 中保存时间。若要更改图片适应文</div>
        <div className={`h-[24px] ${full}`}>档的方式，请单击该图片，图片旁边将会显示布局选项按钮。当处理表格时，单</div>
        <div className="h-[24px]">击要添加行或列的位置，然后单击加号。<Note>②</Note></div>
        <div className={`ml-[29px] h-[24px] ${full}`}>在新的阅读视图中阅读更加容易。可以折叠文档某些部分并关注所需文本。</div>
        <div className={`h-[24px] ${full}`}>如果在达到结尾处之前需要停止读取，<W className="font-['Liberation_Mono'] text-[12px]">Word</W> 会记住您的停止位置<span className="mx-[7px]">-</span>即使在另</div>
        <div className="h-[24px]">一个设备上。</div>
      </div>
    </div>
  </div>
);

const StatusBar = () => (
  <div className="flex h-[17px] shrink-0 items-center bg-[#f1f1f1] pt-[1px] text-[12px] leading-[17px] text-[#555]">
    <span className="ml-[7px] w-[109px] [word-spacing:2px]">第 2 页, 共 3 页</span>
    <span className="w-[94px] [word-spacing:3px]">257/835 个字</span>
    <span className="w-[74px]">修订: 关闭</span>
    <span className="w-[36px]">插入</span>
    <svg width="14" height="13" viewBox="0 0 14 13" fill="none" className="ml-[5px]">
      <rect x="2.500" y="3.500" width="11" height="9" stroke="#777" />
      <path d="M4 6h8M4 8h8M4 10h8" stroke="#777" strokeDasharray="1 1" /><circle cx="3" cy="3" r="2.500" fill="#777" />
    </svg>
    <div className="ml-auto flex h-full w-[291px] items-center">
      <Slot className="w-[13px]"><svg width="13" height="12" viewBox="0 0 13 12" fill="none" stroke="#666"><path d="M.5.500h5l1 1 1-1h5v11h-5l-1-.5-1 .5h-5zM6.500 1.500v10M2 3h3M2 5h3M2 7h3M8 3h3M8 5h3M8 7h3" /></svg></Slot>
      <Slot className="ml-[13px] w-[38px] bg-[#c6c6c6]"><svg width="13" height="12" viewBox="0 0 13 12" fill="none" stroke="#666"><path d="M.5.500h12v11H.5zM2 3h9M2 5h9M2 7h9M2 9h9" /></svg></Slot>
      <Slot className="w-[36px]"><svg width="14" height="13" viewBox="0 0 14 13" fill="none" stroke="#666"><path d="M.5.500h10v12H.5zM2 3h7M2 5h7M2 7h4" /><circle cx="10" cy="9" r="3.500" fill="#777" /></svg></Slot>
    </div>
  </div>
);

const Watermark = () => (
  <div className="absolute right-0 bottom-0 flex h-[50px] w-[200px] bg-white pl-[58px]">
    <div className="mt-px h-[49px] w-[48px] rounded-[3px] border-2 border-[#f03030] p-[1px]">
      <div className={`flex h-full w-full items-center justify-center overflow-hidden bg-[#f01414] text-[42px] leading-none font-black text-[#222] ${ui}`}>杰</div>
    </div>
    <div className="ml-[5px] flex flex-col items-center">
      <div className={`mt-[3px] text-[30px] leading-[34px] font-black text-[#222] ${ui}`}>西</div>
      <div className={`mt-[2px] flex items-center gap-[7px] text-[7px] text-[#444] ${latin}`}>Jie Xi<div className="h-[6px] w-[6px] bg-[#ff0000]" /></div>
    </div>
  </div>
);

const Arrow = ({ x1, y1, x2, y2 }: { x1: number; y1: number; x2: number; y2: number }) => {
  const a = Math.atan2(y2 - y1, x2 - x1);
  const len = Math.hypot(x2 - x1, y2 - y1);
  const p = (d: number, s: number) => `${x2 - d * Math.cos(a) - s * Math.sin(a)},${y2 - d * Math.sin(a) + s * Math.cos(a)}`;
  const shape = `${p(len, 1.5)} ${p(20, 3)} ${p(24, 8)} ${x2},${y2} ${p(24, -8)} ${p(20, -3)} ${p(len, -1.5)}`;
  return (
    <svg width="1309" height="1034" className="pointer-events-none absolute top-0 left-0">
      <polygon points={shape} fill="#777" opacity=".45" transform="translate(2 2)" />
      <polygon points={shape} fill="#e8141c" />
    </svg>
  );
};

export default function App() {
  return (
    <div className={`relative flex h-[1034px] w-[1309px] flex-col overflow-hidden bg-[#e6e6e6] ${ui}`}>
      <TitleBar />
      <Ribbon />
      <QuickBar />
      <HRuler />
      <div className="flex min-h-0 flex-1 overflow-hidden">
        <VRuler />
        <Page />
      </div>
      <StatusBar />
      <Watermark />
      <Arrow x1={454} y1={225} x2={511} y2={130} />
      <Arrow x1={977} y1={529} x2={923} y2={456} />
      <div className="absolute top-[126px] left-[516px]"><PointerIcon s={1.2} /></div>
    </div>
  );
}
